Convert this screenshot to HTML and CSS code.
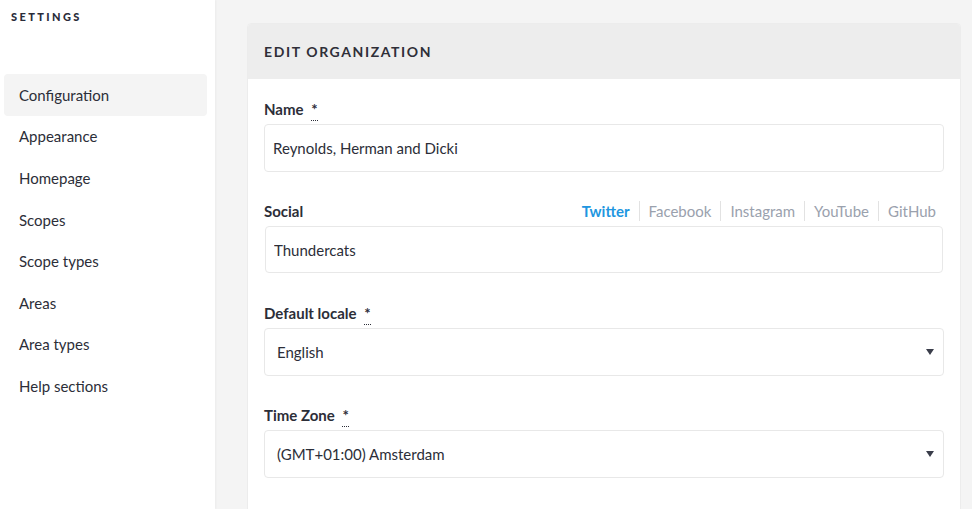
FILE: index.html
```html
<!DOCTYPE html>
<html lang="en">
<head>
    <meta charset="UTF-8">
    <title>Settings - Edit organization</title>
    <link rel="stylesheet" href="styles.css">
</head>
<body>
    <div class="layout">
        <aside class="sidebar">
            <div class="sidebar-title">Settings</div>
            <ul class="sidebar-menu">
                <li class="active"><a href="#">Configuration</a></li>
                <li><a href="#">Appearance</a></li>
                <li><a href="#">Homepage</a></li>
                <li><a href="#">Scopes</a></li>
                <li><a href="#">Scope types</a></li>
                <li><a href="#">Areas</a></li>
                <li><a href="#">Area types</a></li>
                <li><a href="#">Help sections</a></li>
            </ul>
        </aside>
        <main class="main">
            <div class="card">
                <div class="card-header">Edit organization</div>
                <div class="card-body">
                    <div class="field">
                        <label class="label">Name <abbr title="Required">*</abbr></label>
                        <input class="input" type="text" value="Reynolds, Herman and Dicki">
                    </div>
                    <div class="field field-social">
                        <div class="label-row">
                            <label class="label">Social</label>
                            <ul class="tabs">
                                <li class="is-active">Twitter</li>
                                <li>Facebook</li>
                                <li>Instagram</li>
                                <li>YouTube</li>
                                <li>GitHub</li>
                            </ul>
                        </div>
                        <input class="input input-social" type="text" value="Thundercats">
                    </div>
                    <div class="field">
                        <label class="label">Default locale <abbr title="Required">*</abbr></label>
                        <div class="select">
                            <span>English</span>
                            <span class="caret"></span>
                        </div>
                    </div>
                    <div class="field">
                        <label class="label">Time Zone <abbr title="Required">*</abbr></label>
                        <div class="select">
                            <span>(GMT+01:00) Amsterdam</span>
                            <span class="caret"></span>
                        </div>
                    </div>
                </div>
            </div>
        </main>
    </div>
</body>
</html>
```

FILE: styles.css
```css
* {
    box-sizing: border-box;
}
body {
    margin: 0;
    font-family: "Lato", "Noto Sans", sans-serif;
    font-size: 15px;
    color: #2c2e38;
    background: #f4f4f4;
}
.layout {
    display: flex;
    height: 509px;
    overflow: hidden;
}
.sidebar {
    width: 215px;
    flex-shrink: 0;
    background: #fff;
    padding: 10px 8px 0 4px;
    box-shadow: 1px 0 2px rgba(0, 0, 0, 0.04);
}
.sidebar-title {
    font-size: 11px;
    font-weight: 900;
    letter-spacing: 2.4px;
    text-transform: uppercase;
    color: #2a2c3a;
    padding-left: 7px;
    height: 64px;
}
.sidebar-menu {
    list-style: none;
    margin: 0;
    padding: 0;
}
.sidebar-menu li {
    height: 41.6px;
    display: flex;
    align-items: center;
    padding-left: 15px;
    border-radius: 4px;
}
.sidebar-menu li.active {
    background: #f4f4f4;
}
.sidebar-menu a {
    color: #2c2e38;
    text-decoration: none;
}
.main {
    flex: 1;
    padding: 23px 11px 0 32px;
}
.card {
    background: #fff;
    border-radius: 4px;
    border: 1px solid #ececec;
    overflow: hidden;
}
.card-header {
    background: #ededed;
    height: 55px;
    display: flex;
    align-items: center;
    padding-left: 16px;
    font-size: 14px;
    font-weight: 700;
    letter-spacing: 1.6px;
    text-transform: uppercase;
    color: #2f2f38;
}
.card-body {
    padding: 20px 16px 30px 16px;
}
.field {
    margin-bottom: 29px;
}
.field-social {
    margin-bottom: 30px;
}
.label {
    display: block;
    font-weight: 700;
    margin-bottom: 5px;
    line-height: 20px;
}
.label abbr {
    text-decoration: none;
    border-bottom: 1px dotted #2c2e38;
    display: inline-block;
    vertical-align: top;
    line-height: 20px;
    height: 22px;
    margin-bottom: -2px;
    margin-left: 4px;
}
.label-row {
    display: flex;
    justify-content: space-between;
    align-items: flex-start;
    padding-right: 8px;
}
.tabs {
    list-style: none;
    margin: 0;
    padding: 0;
    display: flex;
}
.tabs li {
    color: #9aa1ad;
    padding: 0 9px;
    border-left: 1px solid #e2e2e2;
    line-height: 20px;
}
.tabs li:first-child {
    border-left: none;
}
.tabs li:last-child {
    padding-right: 0;
}
.tabs li.is-active {
    color: #2196e0;
    font-weight: 700;
}
.input, .select {
    display: flex;
    align-items: center;
    width: 100%;
    height: 48px;
    border: 1px solid #e8e8e8;
    border-radius: 4px;
    font: inherit;
    color: inherit;
    padding: 0 9px 0 8px;
    background: #fff;
}
.input-social {
    margin-left: 1px;
    width: calc(100% - 2px);
    height: 47px;
}
.select {
    justify-content: space-between;
    padding-left: 12px;
}
.caret {
    width: 0;
    height: 0;
    border-left: 4px solid transparent;
    border-right: 4px solid transparent;
    border-top: 6px solid #3a3d4a;
}
```
